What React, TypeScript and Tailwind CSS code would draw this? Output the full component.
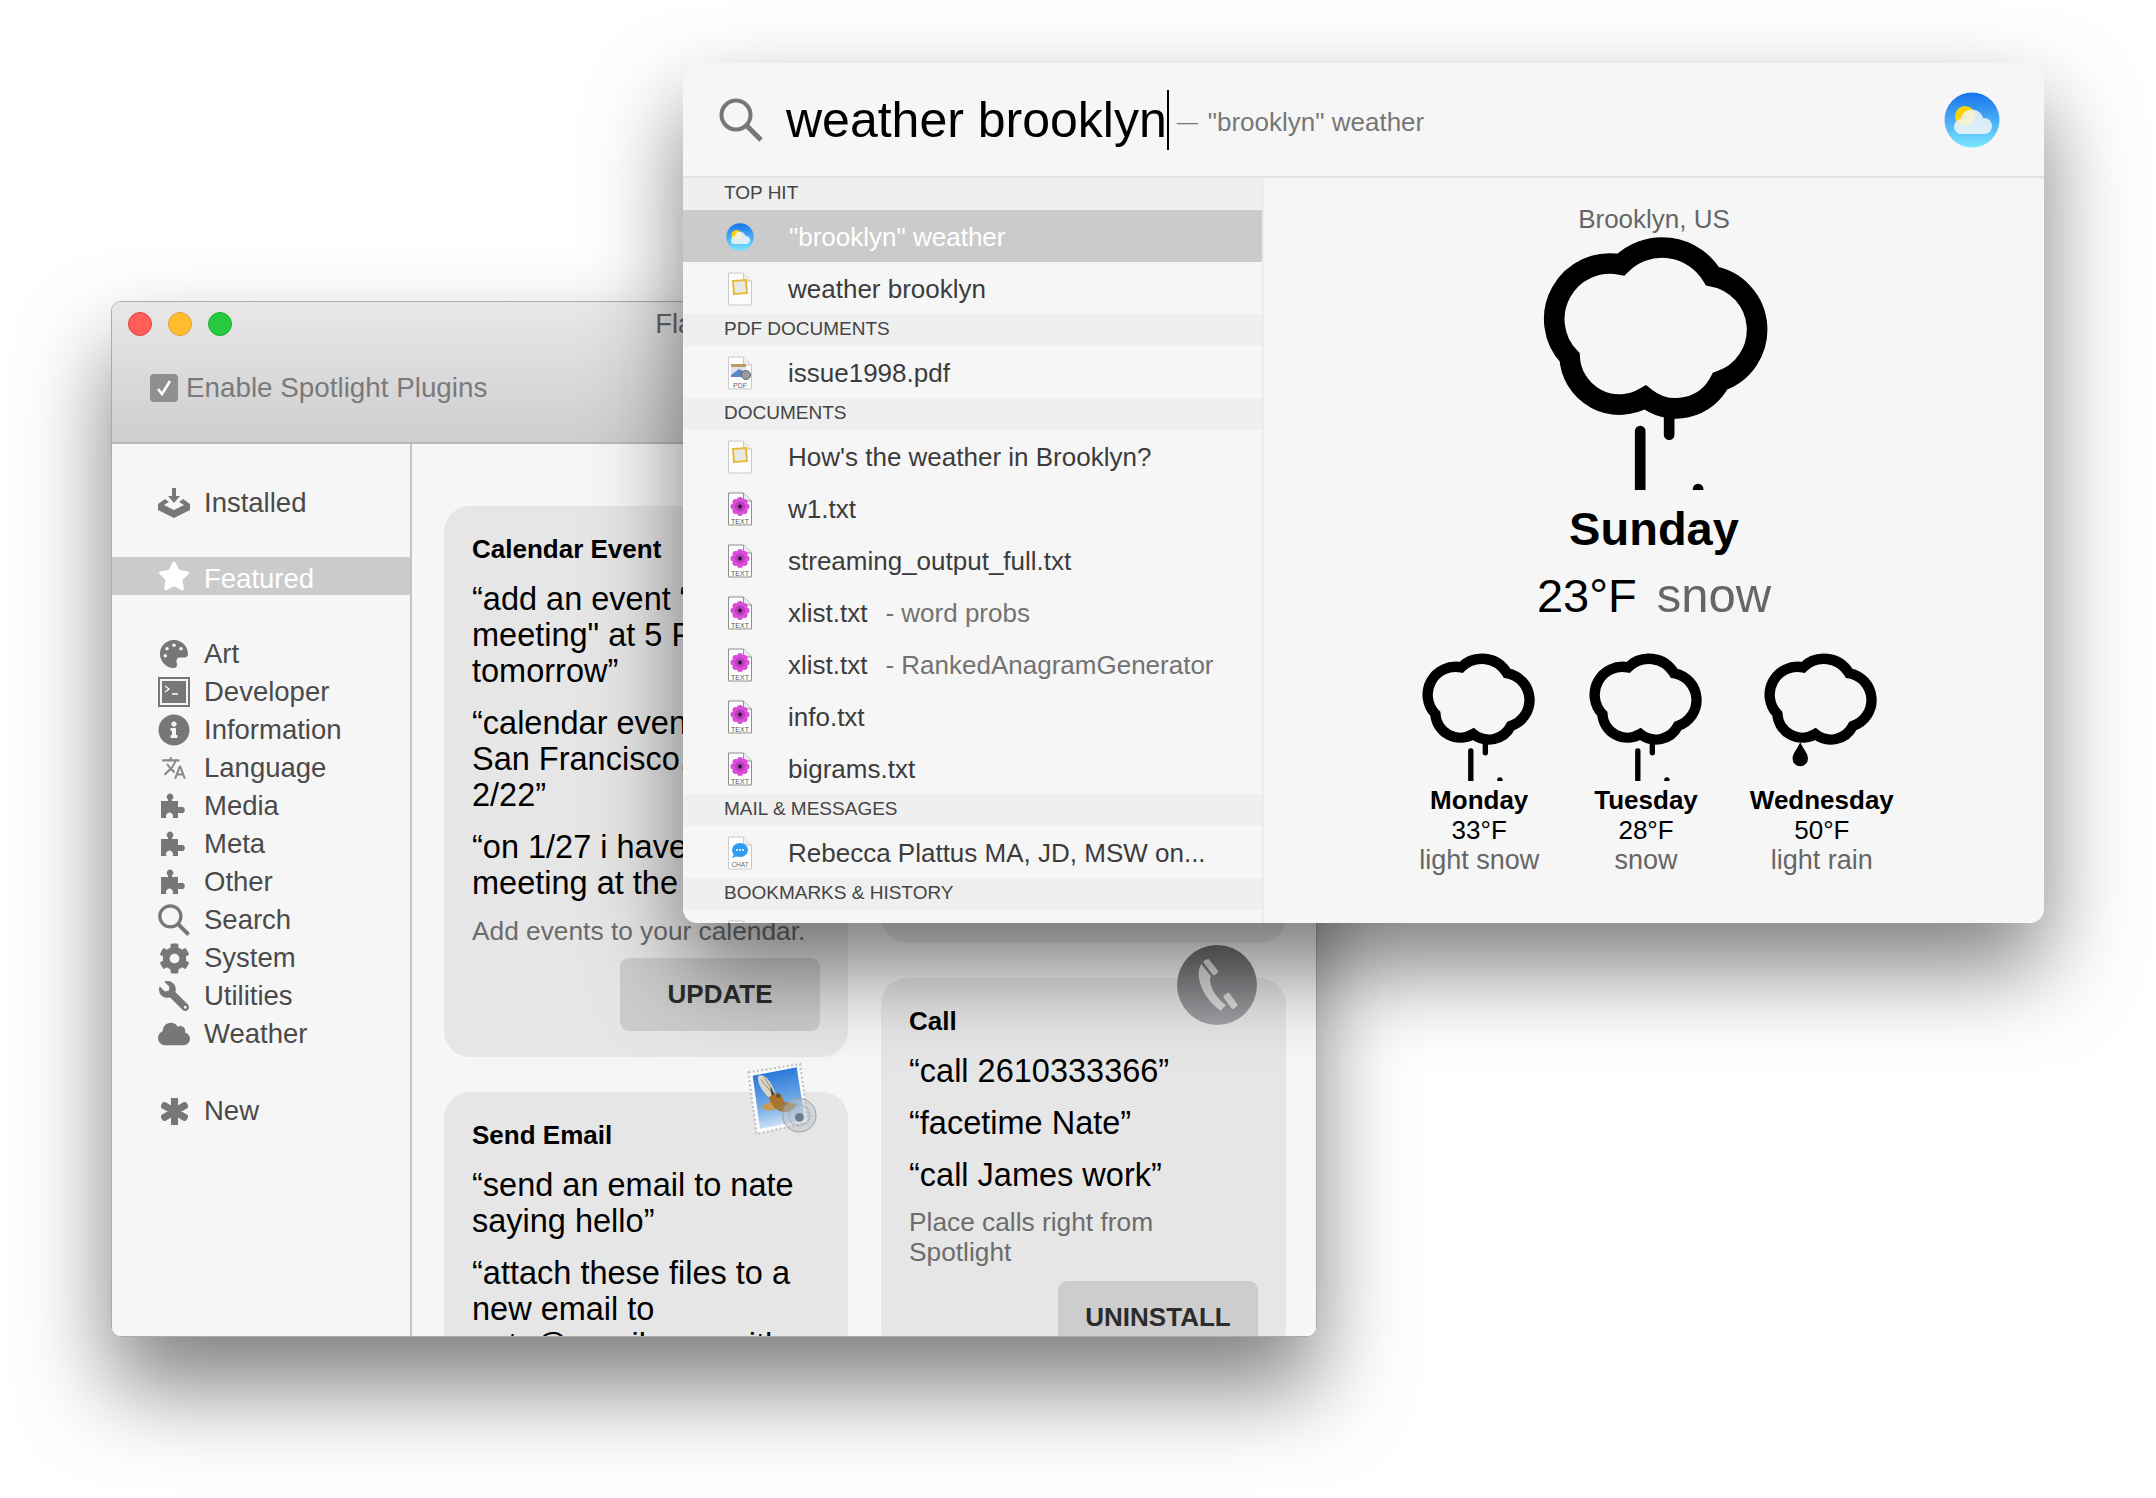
import type { ReactNode } from "react";
import { FaAsterisk, FaCloud, FaCog, FaInfoCircle, FaPalette, FaStar, FaWrench } from "react-icons/fa";
import { MdTranslate } from "react-icons/md";

function Page({ children, edge = "#c9c9c9" }: { children?: ReactNode; edge?: string }) {
  return (
    <svg width="28" height="36" viewBox="0 0 28 36" className="shrink-0">
      <path d="M3.500 2h15l8 8v24h-23z" fill="#fdfdfd" stroke={edge} />
      <path d="M18.500 2v8h8" fill="#ececec" stroke={edge} />
      {children}
    </svg>
  );
}

function NoteIcon() {
  return (
    <Page>
      <path d="M8 10l13-1 1 13-13 1z" fill="#e9e9e6" stroke="#e3bb3a" strokeWidth="2" />
    </Page>
  );
}

function TextIcon() {
  return (
    <Page edge="#8f8f8f">
      <g fill="#d94fd8">
        <circle cx="15" cy="9" r="3" />
        <circle cx="15" cy="22" r="3" />
        <circle cx="8.500" cy="15.500" r="3" />
        <circle cx="21.500" cy="15.500" r="3" />
        <circle cx="10.500" cy="11" r="3" />
        <circle cx="19.500" cy="11" r="3" />
        <circle cx="10.500" cy="20" r="3" />
        <circle cx="19.500" cy="20" r="3" />
      </g>
      <circle cx="15" cy="15.500" r="5" fill="#c03ac4" />
      <circle cx="15" cy="15.500" r="2" fill="#2a1a20" />
      <text x="15" y="32.500" textAnchor="middle" fontSize="7" fill="#555" fontFamily="Liberation Sans">TEXT</text>
    </Page>
  );
}

function PdfIcon() {
  return (
    <Page>
      <rect x="6" y="9" width="15" height="4" fill="#b99a5c" />
      <rect x="6" y="12" width="15" height="10" fill="#dfe6f0" />
      <path d="M6 20l8-6 7 3v5H6z" fill="#5b86c4" />
      <circle cx="21" cy="20" r="4.500" fill="#9a9a9a" stroke="#666" />
      <text x="15" y="32.500" textAnchor="middle" fontSize="7" fill="#666" fontFamily="Liberation Sans">PDF</text>
    </Page>
  );
}

function ChatIcon() {
  return (
    <Page>
      <ellipse cx="15" cy="15" rx="8" ry="7" fill="#2f9df4" />
      <path d="M9 19l-2 4 6-2z" fill="#2f9df4" />
      <circle cx="12" cy="15" r="1" fill="#fff" />
      <circle cx="15" cy="15" r="1" fill="#fff" />
      <circle cx="18" cy="15" r="1" fill="#fff" />
      <text x="15" y="32" textAnchor="middle" fontSize="6.500" fill="#666" fontFamily="Liberation Sans">CHAT</text>
    </Page>
  );
}

function WeatherBadge({ size, id }: { size: number; id: string }) {
  return (
    <svg width={size} height={size} viewBox="0 0 56 56" className="shrink-0">
      <defs>
        <linearGradient id={id} x1="0" y1="0" x2="0" y2="1">
          <stop offset="0" stopColor="#1673ec" />
          <stop offset="1" stopColor="#7ae6ff" />
        </linearGradient>
      </defs>
      <circle cx="28" cy="28" r="27.500" fill={`url(#${id})`} />
      <circle cx="21" cy="24" r="10" fill="#ffd208" />
      <path
        d="M18 42a7.500 7.500 0 0 1-1-15c1-6 6-9.500 11-9.500 5.500 0 9.500 3.500 11 8.500 5-.5 9 3 9 8s-3.500 8-8 8z"
        fill="#f3f7f9"
        fillOpacity="0.85"
      />
    </svg>
  );
}

function CloudShape() {
  return (
    <path
      d="M360 222A175 175 0 0 1 635 257A163 163 0 0 1 658 572A148 148 0 0 1 433 621A150 150 0 0 1 206 501A167 167 0 0 1 360 222Z"
      fill="none"
      stroke="#000"
      strokeWidth="62"
      strokeMiterlimit="3"
    />
  );
}

function SnowCloud({ width }: { width: number }) {
  return (
    <svg width={width} height={(width * 770) / 700} viewBox="120 130 700 770" className="shrink-0">
      <CloudShape />
      <path d="M418 722V960M505 670V733" stroke="#000" strokeWidth="32" strokeLinecap="round" fill="none" />
      <circle cx="592" cy="896" r="16" fill="#000" />
    </svg>
  );
}

function RainCloud({ width }: { width: number }) {
  return (
    <svg width={width} height={(width * 770) / 700} viewBox="120 130 700 770" className="shrink-0">
      <CloudShape />
      <path d="M343 670c20 44 46 66 46 98a46 46 0 0 1-92 0c0-32 26-54 46-98z" fill="#000" />
    </svg>
  );
}

function InstalledIcon() {
  return (
    <svg width="32" height="30" viewBox="0 0 32 30" fill="#777">
      <path d="M14 0h4v8h4l-6 7-6-7h4z" />
      <path d="M7 11l4 3-5 3 10 5 10-5-5-3 4-3 7 5v6l-16 8L0 22v-6z" />
    </svg>
  );
}

function TerminalIcon() {
  return (
    <svg width="32" height="30" viewBox="0 0 32 30">
      <rect x="1" y="1" width="30" height="28" fill="#f6f6f6" stroke="#777" strokeWidth="2" />
      <rect x="4" y="4" width="24" height="22" fill="#777" />
      <path d="M7 9l4 3-4 3M14 17h6" fill="none" stroke="#fff" strokeWidth="1.300" />
    </svg>
  );
}

function PuzzleIcon() {
  return (
    <svg width="26" height="26" viewBox="0 0 26 26" fill="#777">
      <path d="M0 8H7V6.500A3.200 3.200 0 1 1 11 6.500V8H17V14H19.500A3.200 3.200 0 1 1 19.500 20H17V25H11.500A3.500 3.500 0 1 0 5.500 25H0Z" />
    </svg>
  );
}

function SearchGlyph({ size, width, color }: { size: number; width: number; color: string }) {
  return (
    <svg width={size} height={size} viewBox="0 0 44 44" className="shrink-0">
      <circle cx="17" cy="17" r="14.500" fill="none" stroke={color} strokeWidth={width} />
      <path d="M27.500 27.500L42 42" stroke={color} strokeWidth={width + 1} fill="none" />
    </svg>
  );
}

function StampIcon() {
  return (
    <svg width="90" height="90" viewBox="0 0 270 270" className="shrink-0">
      <defs>
        <linearGradient id="stampsky" x1="0.2" y1="0" x2="0.4" y2="1">
          <stop offset="0" stopColor="#1c6fd8" />
          <stop offset="0.6" stopColor="#6fa9e6" />
          <stop offset="1" stopColor="#d5e6f6" />
        </linearGradient>
      </defs>
      <path d="M25 55L180 30L205 205L50 240Z" fill="#fbfbfb" stroke="#bdbdbd" strokeWidth="6" strokeDasharray="6 7" />
      <path d="M38 65L170 40L195 198L60 225Z" fill="url(#stampsky)" />
      <path d="M55 65C78 58 98 90 108 125L85 130C65 110 50 85 55 65Z" fill="#d9d4c8" />
      <path d="M62 76L92 112M72 70L98 108" stroke="#8f8a80" strokeWidth="3" fill="none" />
      <path d="M90 98L108 125L95 127Z" fill="#4f4236" />
      <path d="M105 140C85 145 70 150 65 160C80 178 110 168 125 150Z" fill="#c99a50" />
      <path d="M118 140L170 150C160 175 130 182 108 165Z" fill="#9d7b4b" />
      <path d="M85 130Q110 115 125 125L135 150L105 165Z" fill="#a9742e" />
      <circle cx="115" cy="125" r="7" fill="#7d5022" />
      <circle cx="178" cy="184" r="50" fill="#b9bec4" fillOpacity="0.45" stroke="#9c9fa3" strokeWidth="3" />
      <circle cx="178" cy="184" r="31" fill="none" stroke="#a2a5a9" strokeWidth="5" strokeDasharray="4 4" />
      <circle cx="178" cy="190" r="13" fill="#6e7c8c" />
    </svg>
  );
}

function CallBadge() {
  return (
    <div className="flex h-[80px] w-[80px] items-center justify-center rounded-full bg-gradient-to-b from-[#6f7073] to-[#a2a3a6]">
      <svg width="80" height="80" viewBox="17 15 240 240" fill="#dcdcdc">
        <path d="M112 57L140 92Q142 96 138 99L130 105Q126 107 123 103L97 68Q96 64 100 60Z" />
        <path d="M90 72C70 100 88 170 148 212L164 196C128 168 110 130 118 108Z" />
        <path d="M172 157L198 193Q199 197 196 199L187 206Q183 208 180 205L156 172Q155 168 159 165Z" />
      </svg>
    </div>
  );
}

const iconRow = "flex h-[38px] items-center gap-[14px] pt-[2px] pl-[46px] text-[27.500px] text-[#4a4a4a]";

const sideItems: { label: string; icon: ReactNode }[] = [
  { label: "Art", icon: <FaPalette size={28} color="#777" /> },
  { label: "Developer", icon: <TerminalIcon /> },
  { label: "Information", icon: <FaInfoCircle size={32} color="#777" /> },
  { label: "Language", icon: <MdTranslate size={26} color="#888" /> },
  { label: "Media", icon: <PuzzleIcon /> },
  { label: "Meta", icon: <PuzzleIcon /> },
  { label: "Other", icon: <PuzzleIcon /> },
  { label: "Search", icon: <SearchGlyph size={32} width={4.500} color="#777" /> },
  { label: "System", icon: <FaCog size={31} color="#777" /> },
  { label: "Utilities", icon: <FaWrench size={30} color="#777" className="-scale-x-100" /> },
  { label: "Weather", icon: <FaCloud size={32} color="#777" /> },
];

function SideRow({ label, icon }: { label: string; icon: ReactNode }) {
  return (
    <div className={iconRow}>
      <div className="flex w-[32px] justify-center">{icon}</div>
      <span>{label}</span>
    </div>
  );
}

function Sample({ children }: { children: ReactNode }) {
  return <p className="mb-[16px] text-[32.500px] leading-[36px] text-black">{children}</p>;
}

function CardTitle({ children }: { children: ReactNode }) {
  return <h3 className="mb-[17px] text-[26px] leading-[30px] font-bold text-black">{children}</h3>;
}

function ActionButton({ children, gap }: { children: ReactNode; gap: string }) {
  return (
    <div className={`flex justify-end ${gap}`}>
      <div className="flex h-[73px] w-[200px] items-center justify-center rounded-[9px] bg-[#cdcdcd] text-[26px] font-bold text-[#2c2c2c]">
        {children}
      </div>
    </div>
  );
}

function PluginWindow() {
  return (
    <div className="absolute top-[301px] left-[111px] flex h-[1036px] w-[1206px] flex-col overflow-hidden rounded-[10px] border border-[#aaa] shadow-[0_50px_90px_rgba(0,0,0,0.5)]">
      <div className="h-[142px] shrink-0 border-b-2 border-[#b8b8b8] bg-gradient-to-b from-[#e9e8e9] to-[#cecdcf] px-[16px]">
        <div className="grid h-[44px] grid-cols-[1fr_auto_1fr] items-center">
          <div className="flex gap-[16px]">
            <div className="h-[24px] w-[24px] rounded-full border border-[#e0443e] bg-[#ff5f57]" />
            <div className="h-[24px] w-[24px] rounded-full border border-[#dea034] bg-[#ffbd2e]" />
            <div className="h-[24px] w-[24px] rounded-full border border-[#1dad2b] bg-[#27c93f]" />
          </div>
          <div className="text-[27.500px] text-[#666]">Flashlight</div>
          <div />
        </div>
        <div className="mt-[21px] flex items-center gap-[8px] pl-[22px]">
          <div className="flex h-[28px] w-[28px] items-center justify-center rounded-[4px] bg-[#8f8f8f]">
            <svg width="18" height="18" viewBox="0 0 18 18">
              <path d="M3 10l4 5 8-13" fill="none" stroke="#fff" strokeWidth="2.500" />
            </svg>
          </div>
          <span className="text-[27.800px] text-[#7a7a7a]">Enable Spotlight Plugins</span>
        </div>
      </div>

      <div className="flex min-h-0 flex-1 bg-[#f6f6f6]">
        <div className="h-full w-[300px] shrink-0 border-r-2 border-[#c4c4c4] pt-[39px]">
          <SideRow label="Installed" icon={<InstalledIcon />} />
          <div className="mt-[36px] flex h-[38px] items-center gap-[14px] bg-[#cbcbcb] pl-[46px] text-[27.500px] text-white">
            <div className="flex w-[32px] justify-center">
              <FaStar size={32} color="#fff" />
            </div>
            <span className="pt-[5px]">Featured</span>
          </div>
          <div className="mt-[39px]">
            {sideItems.map((item) => (
              <SideRow key={item.label} label={item.label} icon={item.icon} />
            ))}
          </div>
          <div className="mt-[39px]">
            <SideRow label="New" icon={<FaAsterisk size={27} color="#777" stroke="#777" strokeWidth={50} />} />
          </div>
        </div>

        <div className="flex min-w-0 flex-1 gap-[33px] pt-[62px] pl-[32px]">
          <div className="flex w-[404px] shrink-0 flex-col gap-[35px]">
            <div className="rounded-[26px] bg-[#e6e6e6] px-[28px] pt-[28px] pb-[26px]">
              <CardTitle>Calendar Event</CardTitle>
              <Sample>
                “add an event “team
                <br />
                meeting" at 5 PM
                <br />
                tomorrow”
              </Sample>
              <Sample>
                “calendar event in
                <br />
                San Francisco, on
                <br />
                2/22”
              </Sample>
              <Sample>
                “on 1/27 i have a
                <br />
                meeting at the office”
              </Sample>
              <p className="mt-[-1px] text-[26.300px] leading-[30px] whitespace-nowrap text-[#6c6c6c]">
                Add events to your calendar.
              </p>
              <ActionButton gap="mt-[12px]">UPDATE</ActionButton>
            </div>
            <div className="relative shrink-0 rounded-[26px] bg-[#e6e6e6] px-[28px] pt-[28px]">
              <div className="absolute top-[-38px] right-[18px]">
                <StampIcon />
              </div>
              <CardTitle>Send Email</CardTitle>
              <Sample>
                “send an email to nate
                <br />
                saying hello”
              </Sample>
              <Sample>
                “attach these files to a
                <br />
                new email to
                <br />
                nate@gmail.com with
              </Sample>
            </div>
          </div>

          <div className="flex w-[405px] shrink-0 flex-col gap-[35px]">
            <div className="h-[437px] shrink-0 rounded-[26px] bg-[#e6e6e6]" />
            <div className="relative shrink-0 rounded-[26px] bg-[#e6e6e6] px-[28px] pt-[28px]">
              <div className="absolute top-[-33px] right-[29px]">
                <CallBadge />
              </div>
              <CardTitle>Call</CardTitle>
              <Sample>“call 2610333366”</Sample>
              <Sample>“facetime Nate”</Sample>
              <Sample>“call James work”</Sample>
              <p className="mt-[-2px] text-[26.300px] leading-[30px] text-[#6c6c6c]">
                Place calls right from
                <br />
                Spotlight
              </p>
              <ActionButton gap="mt-[14px]">UNINSTALL</ActionButton>
            </div>
          </div>
        </div>
      </div>
    </div>
  );
}

function SectionHeader({ children }: { children: ReactNode }) {
  return (
    <div className="flex h-[32px] items-center bg-[#efefef] pb-[2px] pl-[41px] text-[19px] text-[#444]">{children}</div>
  );
}

function ResultRow({ icon, name, note }: { icon: ReactNode; name: string; note?: string }) {
  return (
    <div className="flex h-[52px] items-center pt-[2px] pl-[42px] text-[26px] text-[#3c3c3c]">
      <div className="w-[28px]">{icon}</div>
      <span className="ml-[35px]">{name}</span>
      {note && <span className="ml-[18px] text-[#727272]">{note}</span>}
    </div>
  );
}

const forecast = [
  { day: "Monday", temp: "33°F", text: "light snow", gap: "mr-[55px]", icon: <SnowCloud width={117} /> },
  { day: "Tuesday", temp: "28°F", text: "snow", gap: "mr-[52px]", icon: <SnowCloud width={117} /> },
  { day: "Wednesday", temp: "50°F", text: "light rain", gap: "", icon: <RainCloud width={117} /> },
];

function SpotlightWindow() {
  return (
    <div className="absolute top-[63px] left-[683px] flex h-[860px] w-[1361px] flex-col overflow-hidden rounded-[14px] bg-[#f6f6f6] shadow-[0_45px_90px_rgba(0,0,0,0.5)]">
      <div className="flex h-[115px] shrink-0 items-center border-b-2 border-[#e2e2e2] pr-[44px] pl-[36px]">
        <SearchGlyph size={44} width={4} color="#777" />
        <span className="ml-[23px] text-[50px] leading-[60px] text-black">weather brooklyn</span>
        <div className="h-[60px] w-[2px] bg-black" />
        <span className="ml-[8px] pt-[5px] text-[21px] text-[#777]">—</span>
        <span className="ml-[10px] pt-[5px] text-[26px] text-[#777]">"brooklyn" weather</span>
        <div className="ml-auto">
          <WeatherBadge size={56} id="badge-large" />
        </div>
      </div>

      <div className="flex min-h-0 flex-1">
        <div className="w-[581px] shrink-0 overflow-hidden border-r-2 border-[#ececec]">
          <SectionHeader>TOP HIT</SectionHeader>
          <div className="flex h-[52px] items-center bg-[#cbcbcb] pt-[2px] pl-[43px] text-[26px] text-white">
            <WeatherBadge size={28} id="badge-small" />
            <span className="ml-[35px]">"brooklyn" weather</span>
          </div>
          <ResultRow icon={<NoteIcon />} name="weather brooklyn" />
          <SectionHeader>PDF DOCUMENTS</SectionHeader>
          <ResultRow icon={<PdfIcon />} name="issue1998.pdf" />
          <SectionHeader>DOCUMENTS</SectionHeader>
          <ResultRow icon={<NoteIcon />} name="How's the weather in Brooklyn?" />
          <ResultRow icon={<TextIcon />} name="w1.txt" />
          <ResultRow icon={<TextIcon />} name="streaming_output_full.txt" />
          <ResultRow icon={<TextIcon />} name="xlist.txt" note="- word probs" />
          <ResultRow icon={<TextIcon />} name="xlist.txt" note="- RankedAnagramGenerator" />
          <ResultRow icon={<TextIcon />} name="info.txt" />
          <ResultRow icon={<TextIcon />} name="bigrams.txt" />
          <SectionHeader>MAIL &amp; MESSAGES</SectionHeader>
          <ResultRow icon={<ChatIcon />} name="Rebecca Plattus MA, JD, MSW on..." />
          <SectionHeader>BOOKMARKS &amp; HISTORY</SectionHeader>
          <ResultRow icon={<NoteIcon />} name="" />
        </div>

        <div className="flex min-w-0 flex-1 flex-col items-center pt-[26px]">
          <div className="text-[26px] leading-[30px] text-[#666]">Brooklyn, US</div>
          <div className="flex h-[257px] justify-center pl-[6px]">
            <SnowCloud width={233} />
          </div>
          <div className="mt-[12px] text-[47px] leading-[52px] font-bold text-black">Sunday</div>
          <div className="mt-[14px] flex items-baseline gap-[20px] text-[47px] leading-[52px] text-black">
            <span>23°F</span>
            <span className="text-[49px] text-[#666]">snow</span>
          </div>
          <div className="mt-[30px] flex pl-[5px]">
            {forecast.map((f) => (
              <div key={f.day} className={`flex flex-col items-center text-[26px] leading-[30px] ${f.gap}`}>
                <div className="flex h-[128px] w-0 justify-center">{f.icon}</div>
                <div className="mt-[5px] font-bold text-black">{f.day}</div>
                <div className="text-black">{f.temp}</div>
                <div className="text-[27px] text-[#666]">{f.text}</div>
              </div>
            ))}
          </div>
        </div>
      </div>
    </div>
  );
}

export default function App() {
  return (
    <div className="relative h-[1498px] w-[2156px] overflow-hidden bg-white [font-family:'Liberation_Sans',Arial,sans-serif]">
      <PluginWindow />
      <SpotlightWindow />
    </div>
  );
}
